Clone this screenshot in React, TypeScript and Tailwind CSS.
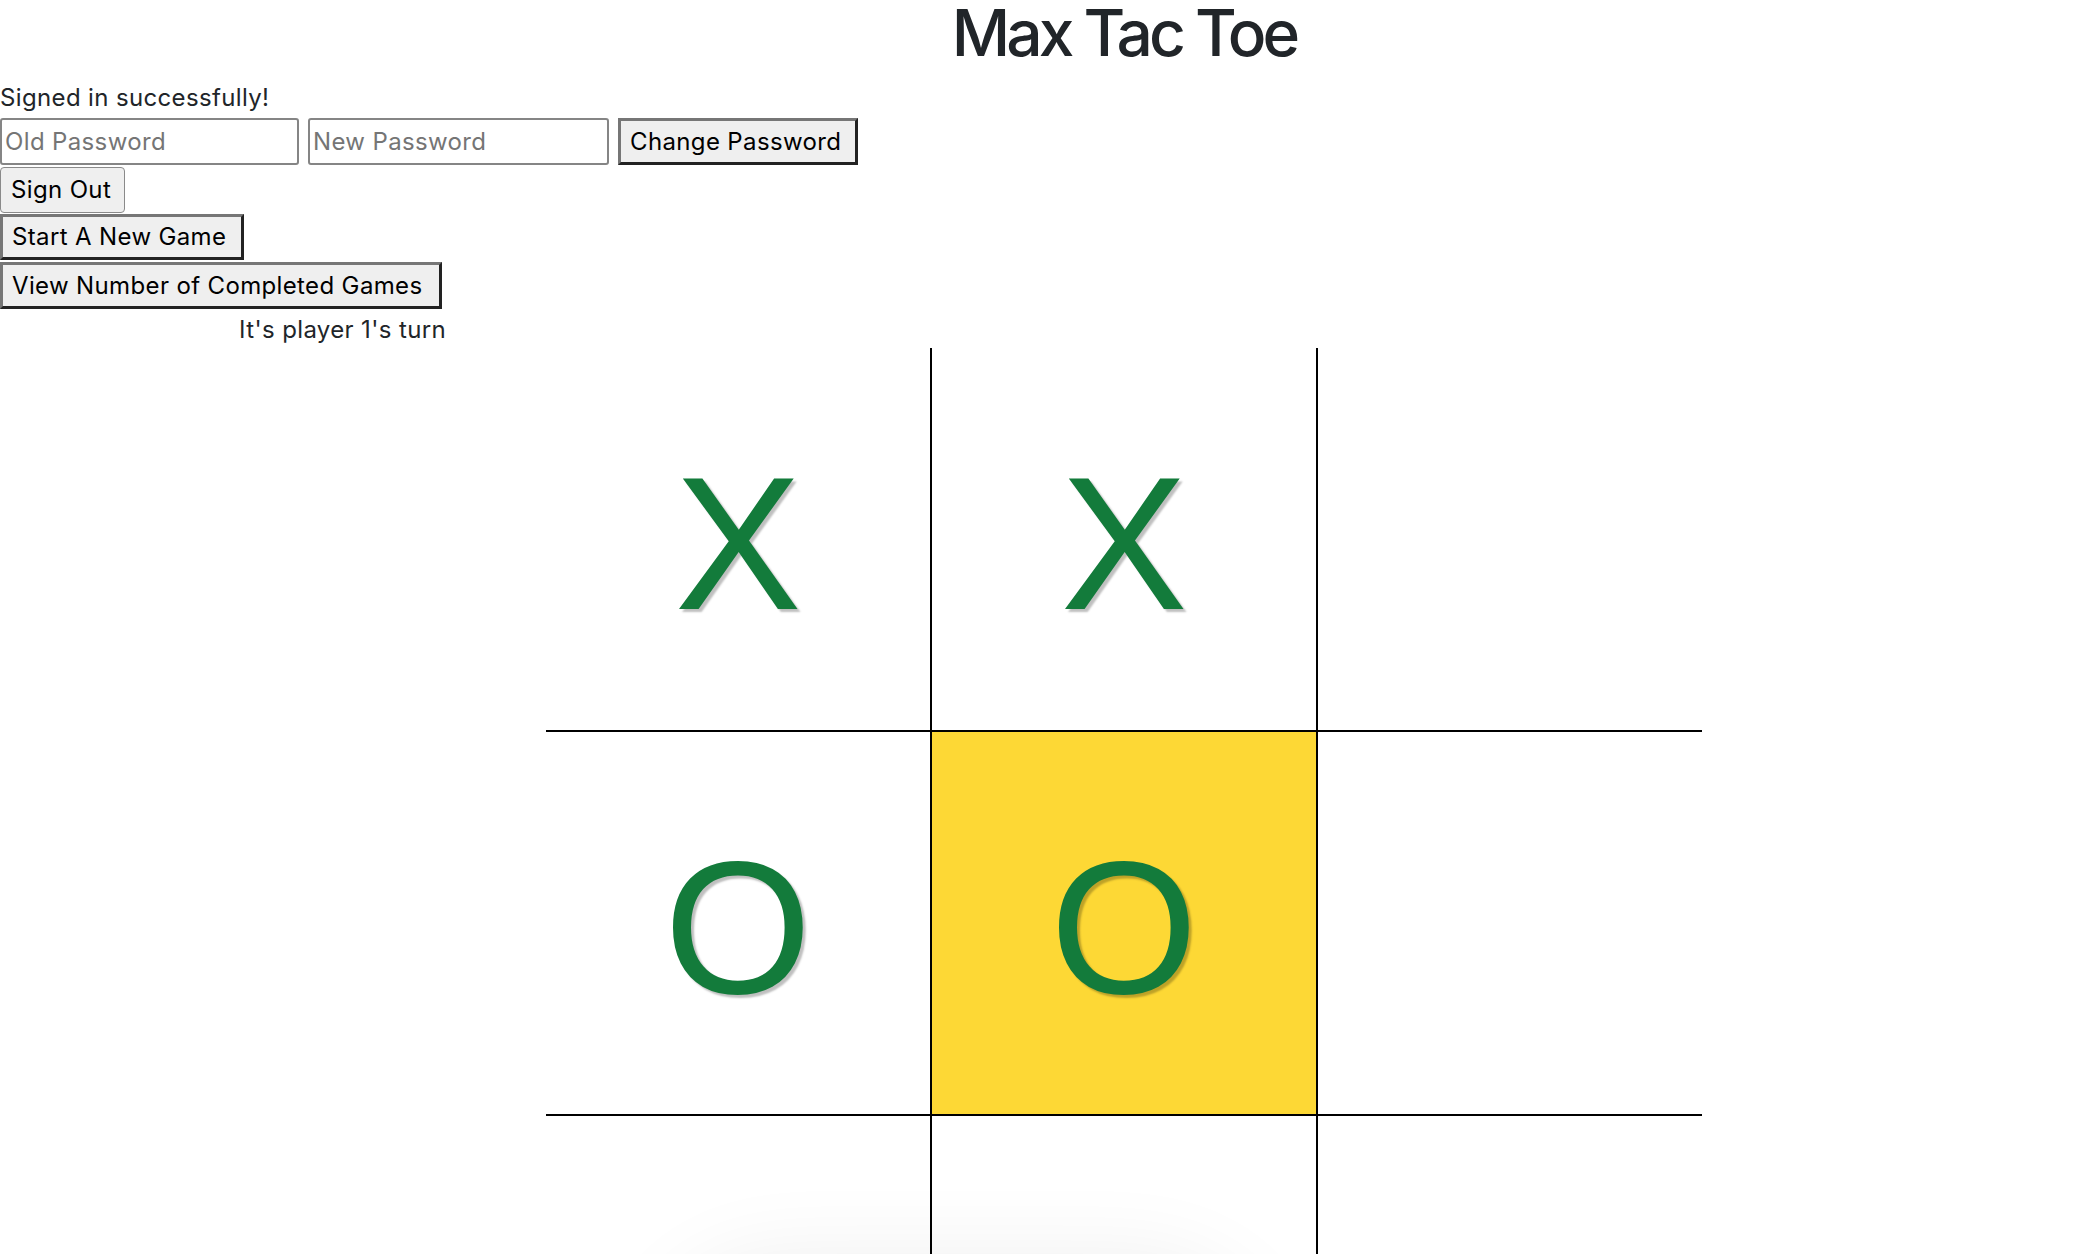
type Mark = "X" | "O" | "";

const board: Mark[][] = [
  ["X", "X", ""],
  ["O", "O", ""],
  ["", "", ""],
];

const highlighted = { row: 1, col: 1 };

function Cell({ mark, row, col }: { mark: Mark; row: number; col: number }) {
  const isLit = row === highlighted.row && col === highlighted.col;
  return (
    <div
      className={[
        "flex h-[384px] items-center justify-center border-black pt-[8px]",
        col < 2 ? "w-[386px] border-r-2" : "w-[384px]",
        row < 2 ? "border-b-2" : "",
        isLit ? "bg-[#fdd835]" : "bg-white",
      ].join(" ")}
    >
      <span className="text-[190px] leading-none tracking-normal text-[#137b3b] [font-family:'Liberation_Sans',Arial,sans-serif] [text-shadow:3px_3px_2px_rgba(0,0,0,0.25)]">
        {mark}
      </span>
    </div>
  );
}

export default function App() {
  return (
    <div className="relative min-h-screen overflow-hidden bg-white text-[24px] tracking-[0.015em] text-[#212529] [font-family:Inter,sans-serif]">
      <h1 className="ml-[546px] w-[1156px] pt-[1px] text-center text-[64px] font-medium leading-none tracking-[-0.062em] text-[#212529]">
        Max Tac Toe
      </h1>

      <div className="mt-[15px] flex flex-col items-start">
        <p className="leading-[36px]">Signed in successfully!</p>

        <div className="mt-[2px] flex h-[47px] gap-[9px]">
          <input
            type="password"
            placeholder="Old Password"
            className="h-full w-[299px] rounded-[3px] border-2 border-[#858585] bg-white pl-[3px] text-[24px] tracking-[0.015em] placeholder:text-[#757575]"
          />
          <input
            type="password"
            placeholder="New Password"
            className="h-full w-[301px] rounded-[3px] border-2 border-[#858585] bg-white pl-[3px] text-[24px] tracking-[0.015em] placeholder:text-[#757575]"
          />
          <button className="h-full w-[240px] border-[3px] border-t-[#767676] border-l-[#767676] border-r-[#222222] border-b-[#222222] bg-[#efefef] pl-[9px] text-left text-black">
            Change Password
          </button>
        </div>

        <button className="mt-[2px] h-[46px] w-[125px] rounded-[4px] border-[1.5px] border-[#8a8a8a] bg-[#efefef] pl-[10px] text-left text-black">
          Sign Out
        </button>

        <button className="mt-[1px] h-[46px] w-[244px] border-[3px] border-t-[#767676] border-l-[#767676] border-r-[#222222] border-b-[#222222] bg-[#efefef] pl-[9px] text-left text-black">
          Start A New Game
        </button>

        <button className="mt-[2px] h-[47px] w-[442px] border-[3px] border-t-[#767676] border-l-[#767676] border-r-[#222222] border-b-[#222222] bg-[#efefef] pl-[9px] text-left text-black">
          View Number of Completed Games
        </button>

        <p className="mt-[3px] w-[446px] text-right leading-[36px]">It's player 1's turn</p>
      </div>

      <div className="ml-[546px] flex w-[1156px] flex-col">
        {board.map((cells, row) => (
          <div key={row} className="flex">
            {cells.map((mark, col) => (
              <Cell key={col} mark={mark} row={row} col={col} />
            ))}
          </div>
        ))}
      </div>

      <div className="absolute left-[680px] top-[1290px] h-[200px] w-[560px] rounded-full shadow-[0_0_90px_30px_rgba(0,0,0,0.07)]" />
    </div>
  );
}
